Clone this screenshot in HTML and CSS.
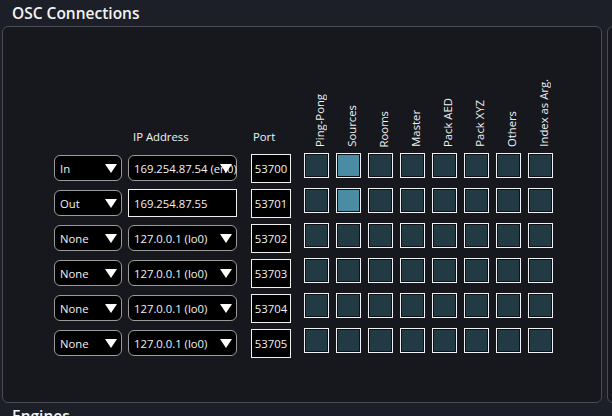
FILE: index.html
```html
<!DOCTYPE html>
<html>
<head>
<meta charset="utf-8">
<link rel="stylesheet" href="styles.css">
</head>
<body>
<div class="layout">
  <section class="column main">
    <h2 class="title">OSC Connections</h2>
    <div class="panel">
      <div class="table">
        <div class="head">
          <div class="h-mode"></div>
          <div class="h-ip">IP Address</div>
          <div class="h-port">Port</div>
          <div class="h-flags">
            <div class="vlabel"><span>Ping-Pong</span></div>
            <div class="vlabel"><span>Sources</span></div>
            <div class="vlabel"><span>Rooms</span></div>
            <div class="vlabel"><span>Master</span></div>
            <div class="vlabel"><span>Pack AED</span></div>
            <div class="vlabel"><span>Pack XYZ</span></div>
            <div class="vlabel"><span>Others</span></div>
            <div class="vlabel"><span>Index as Arg.</span></div>
          </div>
        </div>

        <div class="row">
          <div class="select mode">In</div>
          <div class="select ip">169.254.87.54 (en0)</div>
          <div class="port">53700</div>
          <div class="flags">
            <span class="cb"></span><span class="cb on"></span><span class="cb"></span><span class="cb"></span><span class="cb"></span><span class="cb"></span><span class="cb"></span><span class="cb"></span>
          </div>
        </div>

        <div class="row">
          <div class="select mode">Out</div>
          <div class="textbox ip">169.254.87.55</div>
          <div class="port">53701</div>
          <div class="flags">
            <span class="cb"></span><span class="cb on"></span><span class="cb"></span><span class="cb"></span><span class="cb"></span><span class="cb"></span><span class="cb"></span><span class="cb"></span>
          </div>
        </div>

        <div class="row">
          <div class="select mode">None</div>
          <div class="select ip">127.0.0.1 (lo0)</div>
          <div class="port">53702</div>
          <div class="flags">
            <span class="cb"></span><span class="cb"></span><span class="cb"></span><span class="cb"></span><span class="cb"></span><span class="cb"></span><span class="cb"></span><span class="cb"></span>
          </div>
        </div>

        <div class="row">
          <div class="select mode">None</div>
          <div class="select ip">127.0.0.1 (lo0)</div>
          <div class="port">53703</div>
          <div class="flags">
            <span class="cb"></span><span class="cb"></span><span class="cb"></span><span class="cb"></span><span class="cb"></span><span class="cb"></span><span class="cb"></span><span class="cb"></span>
          </div>
        </div>

        <div class="row">
          <div class="select mode">None</div>
          <div class="select ip">127.0.0.1 (lo0)</div>
          <div class="port">53704</div>
          <div class="flags">
            <span class="cb"></span><span class="cb"></span><span class="cb"></span><span class="cb"></span><span class="cb"></span><span class="cb"></span><span class="cb"></span><span class="cb"></span>
          </div>
        </div>

        <div class="row">
          <div class="select mode">None</div>
          <div class="select ip">127.0.0.1 (lo0)</div>
          <div class="port">53705</div>
          <div class="flags">
            <span class="cb"></span><span class="cb"></span><span class="cb"></span><span class="cb"></span><span class="cb"></span><span class="cb"></span><span class="cb"></span><span class="cb"></span>
          </div>
        </div>
      </div>
    </div>
    <h2 class="title">Engines</h2>
  </section>
  <section class="column side">
    <h2 class="title">&nbsp;</h2>
    <div class="panel side-panel"></div>
  </section>
</div>
</body>
</html>
```

FILE: styles.css
```css
* { box-sizing: border-box; }

html, body {
  margin: 0;
  padding: 0;
  height: 100%;
  overflow: hidden;
  background: #1c1f27;
}

body {
  font-family: "Open Sans", "Noto Sans", "Liberation Sans", sans-serif;
  font-size: 11.3px;
  color: #f2f2f2;
}

.layout {
  display: flex;
  gap: 5px;
  padding-left: 2px;
}

.column { flex: none; }
.main { width: 600px; }
.side { width: 200px; }

.title {
  margin: 0;
  height: 26px;
  line-height: 26px;
  padding-left: 10px;
  font-size: 15.5px;
  font-weight: 600;
  color: #f4f4f4;
  white-space: nowrap;
}

.panel {
  height: 377px;
  border: 1px solid #4a4c53;
  border-radius: 6px;
  background: #17181e;
  padding: 53px 0 0 51px;
}

.side-panel { padding: 0; }

.table {
  display: flex;
  flex-direction: column;
  gap: 5px;
}

.head {
  display: flex;
  align-items: flex-end;
  height: 68px;
}

.h-mode { width: 68px; margin-right: 6px; }

.h-ip {
  width: 109px;
  margin-right: 14px;
  padding-left: 5px;
  line-height: 16px;
  margin-bottom: 3px;
}

.h-port {
  width: 40px;
  margin-right: 13px;
  padding-left: 2px;
  line-height: 16px;
  margin-bottom: 3px;
}

.h-flags {
  display: flex;
  gap: 7px;
  align-items: flex-end;
  height: 100%;
}

.vlabel {
  width: 25px;
  display: flex;
  align-items: flex-end;
  padding-left: 8px;
}

.vlabel span {
  writing-mode: vertical-rl;
  transform: rotate(180deg);
  line-height: 16px;
  white-space: nowrap;
  margin-bottom: 1px;
}

.row {
  display: flex;
  align-items: center;
  height: 30px;
}

.select {
  position: relative;
  height: 26px;
  display: flex;
  align-items: center;
  padding-left: 5px;
  background: #000;
  border: 1px solid #9b9b9b;
  border-radius: 6px;
  white-space: nowrap;
}

.select::after {
  content: "";
  position: absolute;
  right: 4px;
  top: 8px;
  width: 0;
  height: 0;
  border-left: 6px solid transparent;
  border-right: 6px solid transparent;
  border-top: 9px solid #fff;
}

.mode { width: 68px; margin-right: 6px; }
.ip { width: 109px; margin-right: 14px; }

.textbox {
  height: 28px;
  display: flex;
  align-items: center;
  padding-left: 5px;
  background: #000;
  border: 1px solid #f0f0f0;
  white-space: nowrap;
}

.port {
  width: 40px;
  height: 29px;
  margin-right: 13px;
  align-self: flex-end;
  display: flex;
  align-items: center;
  justify-content: center;
  background: #000;
  border: 1px solid #f0f0f0;
}

.flags {
  display: flex;
  gap: 7px;
  align-self: flex-start;
}

.cb {
  width: 25px;
  height: 25px;
  border: 1px solid #f2f2f2;
  box-shadow: inset 0 0 0 1px #0e1216;
  background: #213a44;
}

.cb.on { background: #4a8ca4; }
```
